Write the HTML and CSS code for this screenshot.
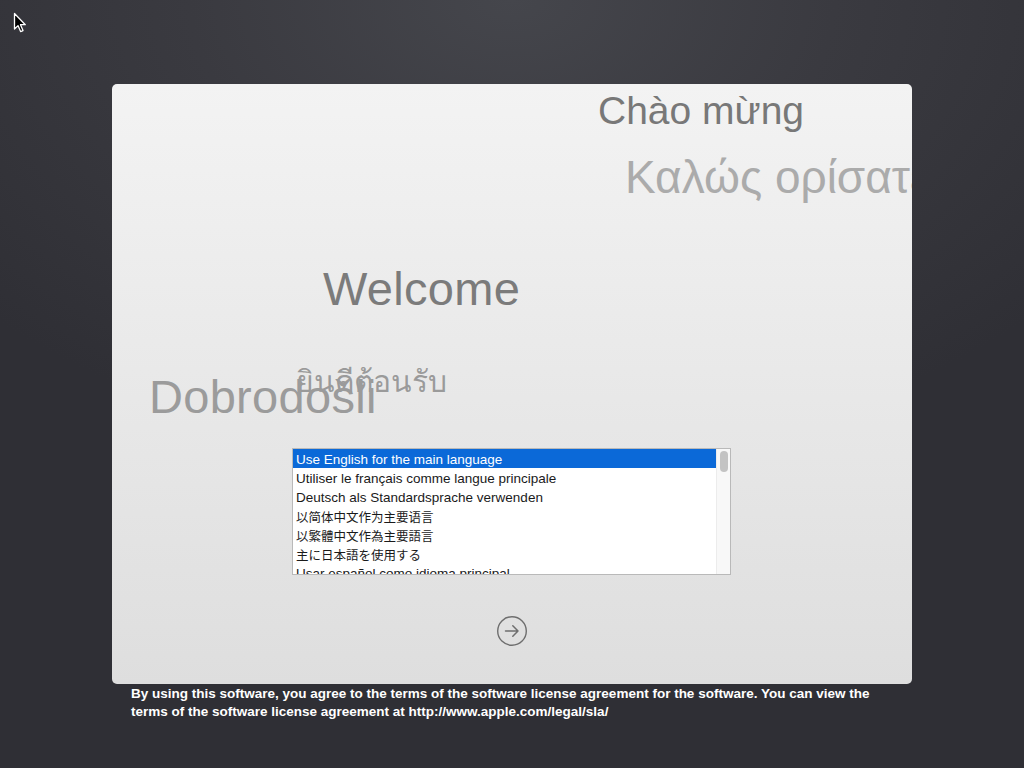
FILE: index.html
```html
<!DOCTYPE html>
<html lang="en">
<head>
<meta charset="utf-8">
<title>Welcome</title>
<link rel="stylesheet" href="styles.css">
</head>
<body>
<svg class="cursor" width="14" height="22" viewBox="0 0 14 22" aria-hidden="true">
  <path d="M1.5 1.5 L1.5 17 L5 13.6 L7.6 19.6 L10 18.6 L7.5 12.7 L12.3 12.7 Z" fill="#000" stroke="#fff" stroke-width="1.3" stroke-linejoin="round"/>
</svg>
<main class="panel">
  <div class="greet greet-vi">Chào mừng</div>
  <div class="greet greet-el">Καλώς ορίσατε</div>
  <div class="greet greet-en">Welcome</div>
  <div class="greet greet-th">ยินดีต้อนรับ</div>
  <div class="greet greet-sr">Dobrodošli</div>

  <div class="listbox">
    <ul class="options">
      <li class="option selected">Use English for the main language</li>
      <li class="option">Utiliser le français comme langue principale</li>
      <li class="option">Deutsch als Standardsprache verwenden</li>
      <li class="option cjk">以简体中文作为主要语言</li>
      <li class="option cjk">以繁體中文作為主要語言</li>
      <li class="option cjk">主に日本語を使用する</li>
      <li class="option">Usar español como idioma principal</li>
    </ul>
    <div class="scrollbar"><div class="thumb"></div></div>
  </div>

  <button class="next" aria-label="Continue">
    <svg width="32" height="32" viewBox="0 0 32 32">
      <circle cx="16" cy="16" r="14.3" fill="none" stroke="#6e6e6e" stroke-width="1.4"/>
      <path d="M9.5 16 H22 M16.8 10.8 L22 16 L16.8 21.2" fill="none" stroke="#6e6e6e" stroke-width="1.5" stroke-linecap="round" stroke-linejoin="round"/>
    </svg>
  </button>
</main>
<p class="license">By using this software, you agree to the terms of the software license agreement for the software. You can view the terms of the software license agreement at http://www.apple.com/legal/sla/</p>
</body>
</html>
```

FILE: styles.css
```css
html, body {
  margin: 0;
  padding: 0;
}
body {
  width: 1024px;
  height: 768px;
  overflow: hidden;
  background: radial-gradient(ellipse 70% 60% at 50% 0%, #45464c 0%, #3a3a40 45%, #2f2f35 100%);
  font-family: "Liberation Sans", Arial, sans-serif;
  position: relative;
}
.cursor {
  position: absolute;
  left: 13px;
  top: 12px;
}
.panel {
  position: relative;
  box-sizing: border-box;
  width: 800px;
  height: 600px;
  margin: 84px auto 0;
  border-radius: 5px;
  overflow: hidden;
  background: linear-gradient(#f3f3f3, #dedede);
  padding-top: 364px;
  display: flex;
  flex-direction: column;
  align-items: center;
}
.greet {
  position: absolute;
  line-height: 1;
  white-space: nowrap;
}
.greet-vi {
  left: 486px;
  top: 7px;
  font-size: 39px;
  color: #787878;
}
.greet-el {
  left: 513px;
  top: 70px;
  font-size: 46px;
  color: #ababab;
}
.greet-en {
  left: 211px;
  top: 181px;
  font-size: 47px;
  letter-spacing: 0.3px;
  color: #7b7b7b;
}
.greet-sr {
  left: 37px;
  top: 289px;
  font-size: 47px;
  letter-spacing: 0.3px;
  color: #9b9b9b;
}
.greet-th {
  left: 184px;
  top: 283px;
  font-size: 30px;
  color: rgba(140, 140, 140, 0.85);
}
.listbox {
  position: relative;
  z-index: 1;
  width: 439px;
  height: 127px;
  margin-right: 1px;
  box-sizing: border-box;
  border: 1px solid #b9b9b9;
  background: #fff;
  display: flex;
  overflow: hidden;
}
.options {
  list-style: none;
  margin: 0;
  padding: 0;
  flex: 1;
}
.option {
  height: 19px;
  line-height: 21px;
  padding-left: 3px;
  font-size: 13.5px;
  color: #1a1a1a;
  white-space: nowrap;
  overflow: hidden;
}
.option.cjk {
  font-family: "Noto Sans CJK JP", "Noto Sans CJK SC", sans-serif;
  font-size: 12.5px;
}
.option.selected {
  background: #0b69d8;
  color: #fff;
}
.scrollbar {
  width: 14px;
  background: #f8f8f8;
  border-left: 1px solid #ececec;
  padding: 2px 0 0 3px;
  box-sizing: border-box;
}
.thumb {
  width: 8px;
  height: 21px;
  border-radius: 4px;
  background: #c3c3c3;
}
.next {
  margin-top: 40px;
  width: 32px;
  height: 32px;
  padding: 0;
  border: 0;
  background: none;
  display: block;
}
.next svg {
  display: block;
}
.license {
  margin: 0;
  padding: 1px 0 0 131px;
  width: 760px;
  font-size: 13.5px;
  line-height: 18px;
  font-weight: bold;
  color: #fff;
}
```
